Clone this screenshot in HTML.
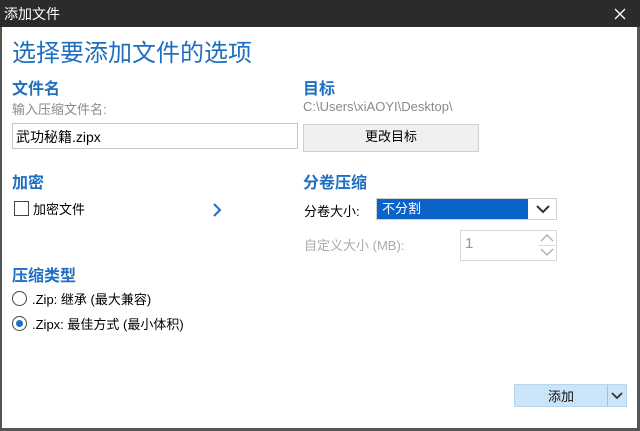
<!DOCTYPE html>
<html><head><meta charset="utf-8"><style>
*{margin:0;padding:0;box-sizing:border-box}
body{width:640px;height:431px;background:#fff;font-family:"Liberation Sans","Noto Sans CJK SC",sans-serif;position:relative;overflow:hidden;color:#000;font-size:13px}
.a{position:absolute;white-space:nowrap}
.h{color:#1e6fc0;font-weight:bold;font-size:16px}
.g{color:#8a8a8a}
</style></head><body>
<div class="a" style="left:0;top:0;width:640px;height:27px;background:#2b2b2b"></div>
<div class="a" style="left:4px;top:4px;color:#fff;font-size:14px">添加文件</div>
<svg class="a" style="left:614px;top:8px" width="12" height="12"><path d="M1 1L11 11M11 1L1 11" stroke="#fff" stroke-width="1.3"/></svg>
<div class="a" style="left:0;top:27px;width:2px;height:404px;background:#555"></div>
<div class="a" style="left:637px;top:27px;width:3px;height:404px;background:#555"></div>
<div class="a" style="left:0;top:428px;width:640px;height:3px;background:#555"></div>
<div class="a" style="left:12px;top:33px;font-size:24px;color:#1e6fc0">选择要添加文件的选项</div>
<div class="a h" style="left:12px;top:75px">文件名</div>
<div class="a g" style="left:12px;top:99px">输入压缩文件名:</div>
<div class="a" style="left:12px;top:123px;width:286px;height:26px;border:1px solid #c8c8c8;padding:3px 3px;font-size:14px">武功秘籍.zipx</div>
<div class="a h" style="left:303px;top:75px">目标</div>
<div class="a g" style="left:303px;top:99px">C:\Users\xiAOYI\Desktop\</div>
<div class="a" style="left:303px;top:124px;width:176px;height:28px;border:1px solid #cfcfcf;background:#f0f0f0;text-align:center;line-height:24px">更改目标</div>
<div class="a h" style="left:12px;top:169px">加密</div>
<div class="a" style="left:14px;top:201px;width:15px;height:15px;border:1px solid #444"></div>
<div class="a" style="left:33px;top:199px">加密文件</div>
<svg class="a" style="left:211px;top:203px" width="12" height="14"><path d="M3 1L9 7L3 13" stroke="#1e6fc0" stroke-width="2" fill="none"/></svg>
<div class="a h" style="left:303px;top:169px">分卷压缩</div>
<div class="a" style="left:304px;top:201px">分卷大小:</div>
<div class="a" style="left:376px;top:198px;width:181px;height:22px;border:1px solid #d0d0d0"></div>
<div class="a" style="left:377px;top:199px;width:151px;height:20px;background:#0a63c8;color:#fff;padding:0 5px;line-height:19px">不分割</div>
<svg class="a" style="left:536px;top:204px" width="14" height="10"><path d="M1 2L7 8L13 2" stroke="#333" stroke-width="2" fill="none"/></svg>
<div class="a g" style="left:304px;top:235px;color:#aaa">自定义大小 (MB):</div>
<div class="a" style="left:460px;top:230px;width:97px;height:31px;border:1px solid #d8d8d8"></div>
<div class="a" style="left:465px;top:235px;color:#999;font-size:15px">1</div>
<svg class="a" style="left:538px;top:231px" width="18" height="29"><path d="M3 10L9 4L15 10M3 18L9 24L15 18" stroke="#aaa" stroke-width="1.3" fill="none"/><line x1="0" y1="14.5" x2="18" y2="14.5" stroke="#ddd"/></svg>
<div class="a h" style="left:12px;top:262px">压缩类型</div>
<div class="a" style="left:12px;top:291px;width:15px;height:15px;border:1px solid #444;border-radius:50%"></div>
<div class="a" style="left:32px;top:289px">.Zip: 继承 (最大兼容)</div>
<div class="a" style="left:12px;top:316px;width:15px;height:15px;border:1px solid #444;border-radius:50%"></div>
<div class="a" style="left:16px;top:320px;width:7px;height:7px;background:#1e6fc0;border-radius:50%"></div>
<div class="a" style="left:32px;top:314px">.Zipx: 最佳方式 (最小体积)</div>
<div class="a" style="left:514px;top:384px;width:113px;height:23px;background:#cce4f7;border:1px solid #b7d6f0"></div>
<div class="a" style="left:514px;top:386px;width:94px;text-align:center;color:#111">添加</div>
<div class="a" style="left:607px;top:385px;width:1px;height:21px;background:#9cc3e6"></div>
<svg class="a" style="left:611px;top:392px" width="12" height="8"><path d="M1 1L6 6L11 1" stroke="#333" stroke-width="1.8" fill="none"/></svg>
</body></html>
